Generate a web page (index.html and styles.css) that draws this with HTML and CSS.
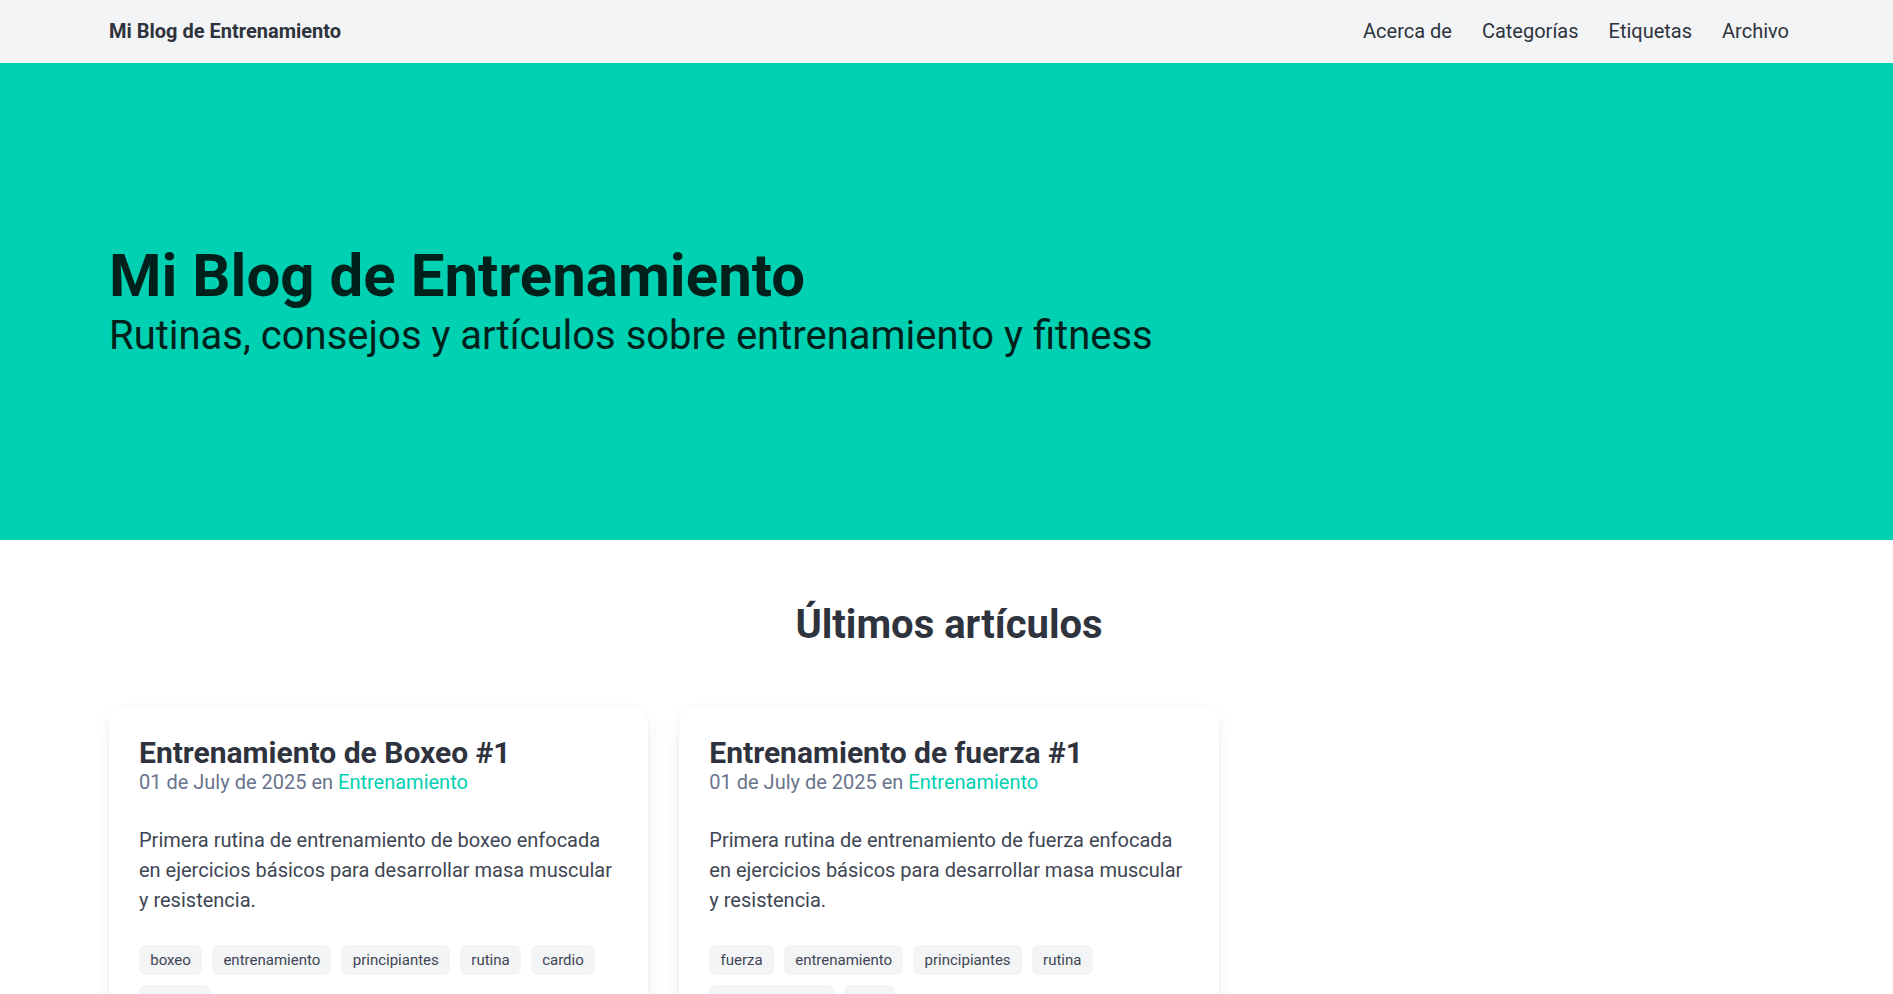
FILE: index.html
```html
<!DOCTYPE html>
<html lang="es">
<head>
<meta charset="utf-8">
<title>Mi Blog de Entrenamiento</title>
<link rel="stylesheet" href="styles.css">
</head>
<body>
<nav class="navbar">
  <div class="container nav-inner">
    <a class="brand" href="#">Mi Blog de Entrenamiento</a>
    <div class="nav-links">
      <a href="#">Acerca de</a>
      <a href="#">Categorías</a>
      <a href="#">Etiquetas</a>
      <a href="#">Archivo</a>
    </div>
  </div>
</nav>
<section class="hero">
  <div class="container">
    <h1 class="hero-title">Mi Blog de Entrenamiento</h1>
    <p class="hero-subtitle">Rutinas, consejos y artículos sobre entrenamiento y fitness</p>
  </div>
</section>
<section class="section">
  <div class="container">
    <h2 class="section-title">Últimos artículos</h2>
    <div class="grid">
      <article class="card">
        <h3 class="card-title">Entrenamiento de Boxeo #1</h3>
        <p class="card-meta">01 de July de 2025 en <a href="#">Entrenamiento</a></p>
        <p class="card-text">Primera rutina de entrenamiento de boxeo enfocada en ejercicios básicos para desarrollar masa muscular y resistencia.</p>
        <div class="tags">
          <span class="tag">boxeo</span>
          <span class="tag">entrenamiento</span>
          <span class="tag">principiantes</span>
          <span class="tag">rutina</span>
          <span class="tag">cardio</span>
          <span class="tag">técnica</span>
        </div>
      </article>
      <article class="card">
        <h3 class="card-title">Entrenamiento de fuerza #1</h3>
        <p class="card-meta">01 de July de 2025 en <a href="#">Entrenamiento</a></p>
        <p class="card-text">Primera rutina de entrenamiento de fuerza enfocada en ejercicios básicos para desarrollar masa muscular y resistencia.</p>
        <div class="tags">
          <span class="tag">fuerza</span>
          <span class="tag">entrenamiento</span>
          <span class="tag">principiantes</span>
          <span class="tag">rutina</span>
          <span class="tag">levantamientos</span>
          <span class="tag">gym</span>
        </div>
      </article>
    </div>
  </div>
</section>
</body>
</html>
```

FILE: styles.css
```css
* { box-sizing: border-box; }

html { font-size: 20px; }

body {
  margin: 0;
  font-family: Roboto, "Liberation Sans", Arial, sans-serif;
  font-size: 20px;
  line-height: 1.5;
  color: #404654;
  background: #ffffff;
}

a { text-decoration: none; }

.container {
  width: 1680px;
  margin: 0 104px 0 109px;
}

.navbar {
  background: #f3f4f6;
  height: 63px;
}

.nav-inner {
  height: 100%;
  display: flex;
  align-items: center;
  justify-content: space-between;
  padding-bottom: 2px;
}

.brand {
  font-size: 20px;
  font-weight: 700;
  color: #2e333d;
}

.nav-links {
  display: flex;
  gap: 30px;
}

.nav-links a {
  font-size: 20px;
  color: #2e333d;
}

.hero {
  background: #00d1b2;
  height: 477px;
  display: flex;
  align-items: center;
}

.hero-title {
  margin: 0 0 1px;
  font-size: 60px;
  line-height: 1.125;
  font-weight: 700;
  color: #00211b;
}

.hero-subtitle {
  margin: 0;
  font-size: 40px;
  line-height: 1.25;
  font-weight: 400;
  color: #00211b;
}

.section {
  padding: 62px 0 60px;
}

.section-title {
  margin: 0 0 59px;
  text-align: center;
  font-size: 40px;
  line-height: 1.125;
  font-weight: 700;
  color: #2e333d;
}

.grid {
  display: grid;
  grid-template-columns: repeat(3, 1fr);
  gap: 31px;
}

.card {
  background: #ffffff;
  border-radius: 15px;
  padding: 30px;
  box-shadow: 0 10px 20px -2.5px rgba(10, 10, 10, 0.08), 0 0 0 1px rgba(10, 10, 10, 0.025);
}

.card-title {
  margin: 0;
  font-size: 30px;
  line-height: 1.125;
  font-weight: 700;
  color: #2e333d;
}

.card-meta {
  margin: 0;
  font-size: 20px;
  line-height: 1.25;
  color: #69748c;
}

.card-meta a {
  color: #00d1b2;
}

.card-text {
  margin: 30px 0 30px;
  font-size: 20px;
  line-height: 1.5;
  color: #404654;
}

.tags {
  display: flex;
  flex-wrap: wrap;
  gap: 10px;
}

.tag {
  display: inline-flex;
  align-items: center;
  height: 30px;
  padding: 0 11.25px;
  border-radius: 6px;
  background: #f3f4f6;
  font-size: 15px;
  color: #404654;
  white-space: nowrap;
}
```
